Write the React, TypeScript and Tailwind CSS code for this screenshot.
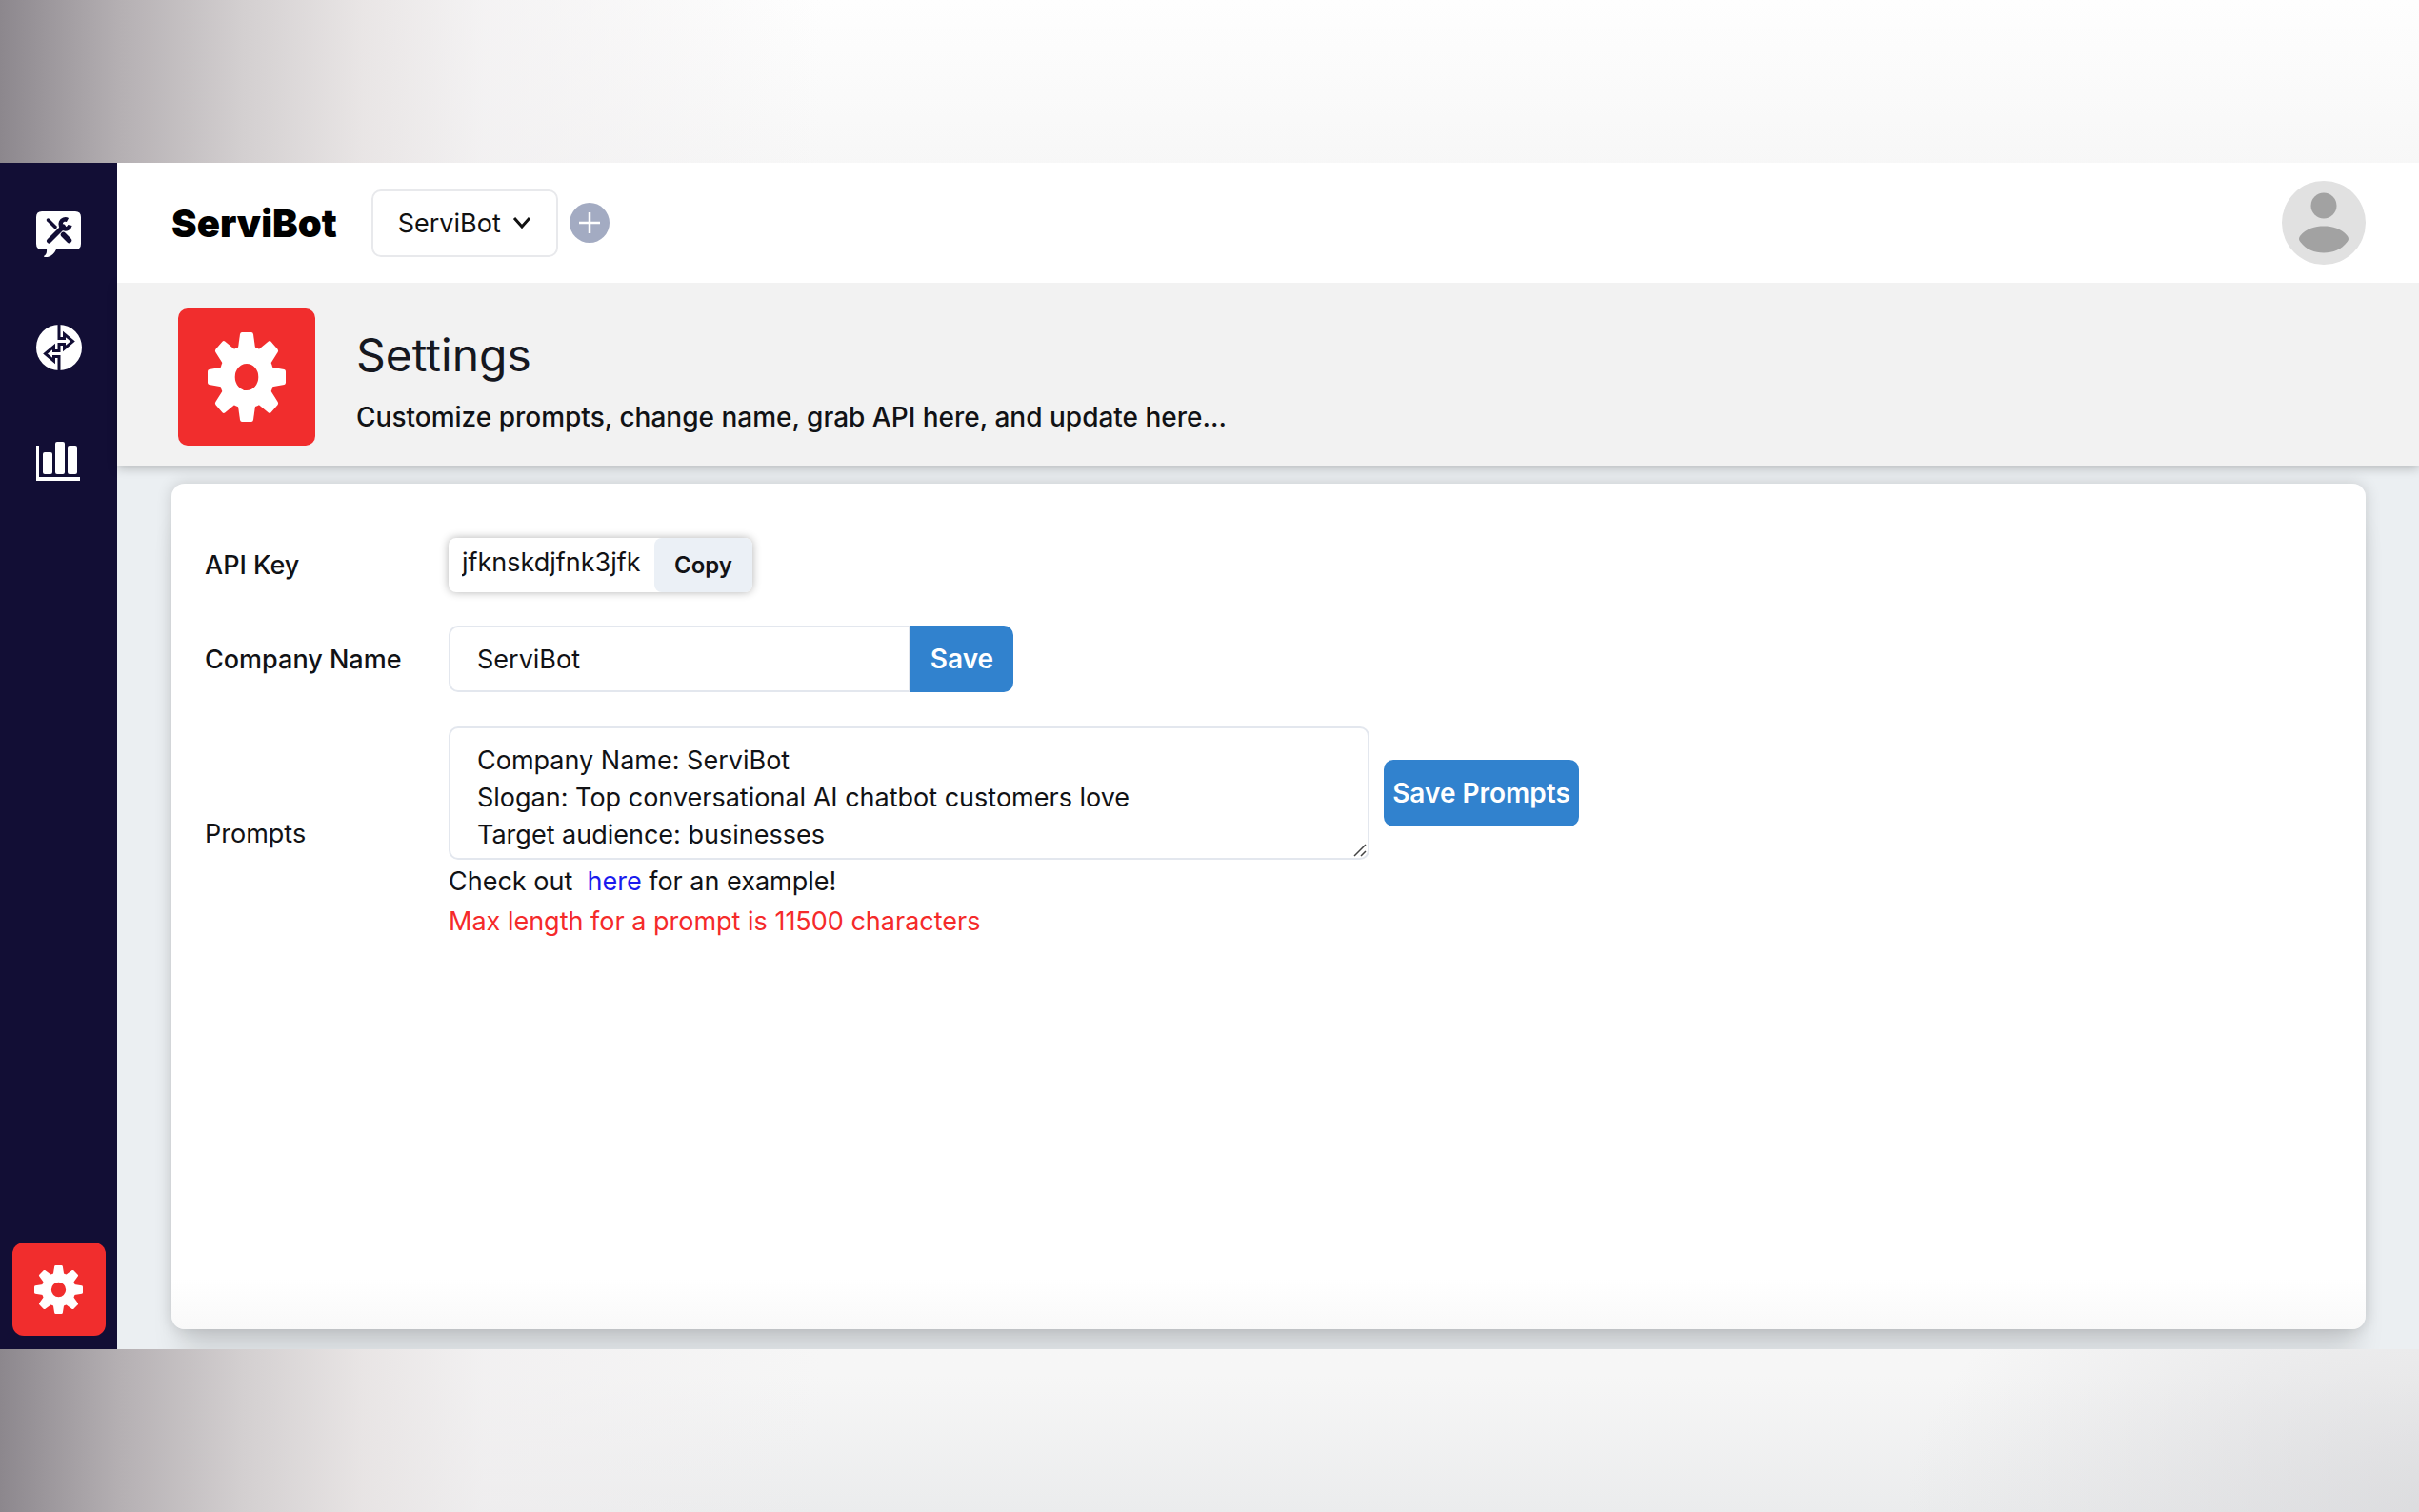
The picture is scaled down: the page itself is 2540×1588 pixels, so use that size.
import { useState } from 'react'

const PROMPTS = `Company Name: ServiBot
Slogan: Top conversational AI chatbot customers love
Target audience: businesses`

function ChatToolsIcon() {
    return (
        <svg viewBox="0 0 48 48" className="w-12 h-12">
            <path fill="#fff" d="M6 0h35q6 0 6 6v28q0 6-6 6H21q-3 6.500-9 8q-4 .5-4-1q3.500-2 3-7H6q-6 0-6-6V6q0-6 6-6z" />
            <g stroke="#120e35" strokeLinecap="round" fill="none">
                <path strokeWidth="3.500" d="M12.500 9l7.500 7.500" />
                <path strokeWidth="5.500" d="M28.500 24.500l6 6" />
                <path strokeWidth="5" d="M13.500 31L28.500 16" />
                <path strokeWidth="4.500" strokeLinecap="butt" d="M33 9a5 5 0 1 0 2.500 5.500" />
            </g>
        </svg>
    )
}

function ExchangeIcon() {
    return (
        <svg viewBox="0 0 48 48" className="w-12 h-12">
            <circle cx="24" cy="24" r="24" fill="#fff" />
            <path
                fill="none"
                stroke="#120e35"
                strokeWidth="3"
                d="M24 0v14.500h5.500V10l9 7.500l-9 7.500v-4.500H24v7h-5.500V23l-9 7.500l9 7.500v-4.500H24V48"
            />
        </svg>
    )
}

function ChartIcon() {
    return (
        <svg viewBox="0 0 48 48" className="w-12 h-12" fill="#fff">
            <path d="M0 8h3v33h43v4H0z" />
            <rect x="7" y="15" width="10" height="23" rx="2" />
            <rect x="20" y="4" width="10" height="34" rx="2" />
            <rect x="33" y="8" width="10" height="30" rx="2" />
        </svg>
    )
}

function GearIcon({ className }: { className: string }) {
    const teeth = [0, 45, 90, 135, 180, 225, 270, 315]
    return (
        <svg viewBox="0 0 100 100" preserveAspectRatio="none" className={className}>
            <g fill="#fff">
                {teeth.map((angle) => (
                    <path key={angle} transform={`rotate(${angle} 50 50)`} d="M38 24L41.500 2Q42 0 44 0h12Q58 0 58.500 2l3.500 22z" />
                ))}
            </g>
            <circle cx="50" cy="50" r="25" fill="none" stroke="#fff" strokeWidth="20" />
        </svg>
    )
}

function Sidebar() {
    return (
        <nav className="w-[123px] shrink-0 bg-[#120e35] flex flex-col items-center pt-[51px] pb-[14px]">
            <div className="flex flex-col items-center gap-[71px]">
                <a href="#chat" aria-label="Chat"><ChatToolsIcon /></a>
                <a href="#integrations" aria-label="Integrations"><ExchangeIcon /></a>
                <a href="#analytics" aria-label="Analytics"><ChartIcon /></a>
            </div>
            <a
                href="#settings"
                aria-label="Settings"
                className="mt-auto w-[98px] h-[98px] rounded-[12px] bg-[#f12d2d] flex items-center justify-center"
            >
                <GearIcon className="w-[51px] h-[51px]" />
            </a>
        </nav>
    )
}

function Header() {
    return (
        <header className="relative z-10 h-[126px] bg-white flex items-center pl-[57px] pr-14">
            <span className="text-[40px] font-black text-black">ServiBot</span>
            <button className="ml-9 h-[71px] px-[26px] rounded-[10px] border-2 border-[#e8e9ec] flex items-center gap-3 text-[#111]">
                ServiBot
                <svg viewBox="0 0 20 14" className="w-5 h-3.5" fill="none" stroke="currentColor" strokeWidth="3">
                    <path d="M2 2l8 9l8-9" />
                </svg>
            </button>
            <button aria-label="Add" className="ml-3 w-[42px] h-[42px] rounded-full bg-[#a3abc2] flex items-center justify-center">
                <svg viewBox="0 0 22 22" className="w-[22px] h-[22px]" stroke="#fff" strokeWidth="2.500">
                    <path d="M11 0v22M0 11h22" />
                </svg>
            </button>
            <button aria-label="Account" className="ml-auto">
                <svg viewBox="0 0 88 88" className="w-[88px] h-[88px]">
                    <circle cx="44" cy="44" r="44" fill="#e1e1e1" />
                    <circle cx="44" cy="26" r="13.500" fill="#a2a2a2" />
                    <path fill="#a2a2a2" d="M19 58C25 50 35 47.500 44 47.500S63 50 69 58q2 3 0 5.500C63 72 54 75.500 44 75.500S25 72 19 63.500q-2-2.500 0-5.500z" />
                </svg>
            </button>
        </header>
    )
}

export default function App() {
    const [company, setCompany] = useState('ServiBot')
    const [prompts, setPrompts] = useState(PROMPTS)

    return (
        <div
            className="min-h-screen flex flex-col py-[171px] text-[27px] leading-[39px] text-[#111215] font-['Inter',sans-serif]
                bg-[linear-gradient(to_right,#8c878d_0%,#b5b0b3_5%,#d3cfd0_10%,rgba(231,227,227,0.9)_15%,rgba(240,238,239,0.7)_20%,rgba(247,247,247,0)_34%),radial-gradient(ellipse_at_bottom_right,rgba(214,214,217,0.7),rgba(235,235,237,0)_15%),linear-gradient(to_bottom,#fefefe,#f7f7f7_11%,#f6f6f6_91%,#ebeced)]"
        >
            <div className="flex-1 flex overflow-hidden">
                <Sidebar />
                <main className="flex-1 flex flex-col bg-[#ebeff2]">
                    <Header />
                    <section className="relative h-48 bg-[#f2f2f2] flex items-center gap-[43px] pl-16 pt-[5px] shadow-[0_3px_10px_rgba(0,0,0,0.22)]">
                        <div className="w-36 h-36 rounded-[10px] bg-[#f12d2d] flex items-center justify-center">
                            <GearIcon className="w-[82px] h-[94px]" />
                        </div>
                        <div className="pt-2.5">
                            <h1 className="text-[48px] leading-[60px] text-[#16181f]">Settings</h1>
                            <p className="mt-4 text-[28px] font-medium">Customize prompts, change name, grab API here, and update here...</p>
                        </div>
                    </section>

                    <section
                        className="flex-1 mt-[19px] mb-[21px] ml-[57px] mr-14 px-[35px] pt-[57px] rounded-[14px]
                            bg-[linear-gradient(to_bottom,#ffffff_94%,#f9f9f9)] shadow-[0_0_16px_rgba(0,0,0,0.16),0_36px_30px_-10px_rgba(0,0,0,0.12)]"
                    >
                        <div className="flex items-center">
                            <label htmlFor="api-key" className="w-64 font-medium">API Key</label>
                            <div className="h-[57px] w-[319px] flex rounded-[8px] bg-white shadow-[0_0_10px_rgba(0,0,0,0.3)]">
                                <input
                                    id="api-key"
                                    readOnly
                                    value="jfknskdjfnk3jfk"
                                    className="flex-1 min-w-0 pl-3.5 pb-1.5 bg-transparent outline-none"
                                />
                                <button className="w-[103px] rounded-[8px] bg-[#ebf0f6] text-[24px] font-semibold">Copy</button>
                            </div>
                        </div>

                        <div className="mt-[35px] flex items-center">
                            <label htmlFor="company" className="w-64 font-medium">Company Name</label>
                            <input
                                id="company"
                                value={company}
                                onChange={(e) => setCompany(e.target.value)}
                                className="w-[485px] h-[70px] px-7 rounded-l-[10px] border-2 border-[#e3e7ee] outline-none"
                            />
                            <button className="w-[108px] h-[70px] rounded-r-[10px] bg-[#3182ce] text-white text-[28px] font-semibold">Save</button>
                        </div>

                        <div className="mt-9 flex items-center">
                            <label htmlFor="prompts" className="w-64">Prompts</label>
                            <div>
                                <div className="flex items-center gap-[15px]">
                                    <div className="relative">
                                        <textarea
                                            id="prompts"
                                            value={prompts}
                                            onChange={(e) => setPrompts(e.target.value)}
                                            className="block w-[967px] h-[140px] px-7 py-[14px] rounded-[10px] border-2 border-[#e3e7ee] outline-none overflow-hidden resize-none"
                                        />
                                        <svg viewBox="0 0 14 14" className="absolute right-[3px] bottom-[3px] w-3.5 h-3.5" stroke="#444" strokeWidth="1.500">
                                            <path d="M1 13L13 1M8 13l5-5" />
                                        </svg>
                                    </div>
                                    <button className="w-[205px] h-[70px] rounded-[10px] bg-[#3182ce] text-white text-[28px] font-semibold">Save Prompts</button>
                                </div>
                                <p className="mt-[3px] whitespace-pre">
                                    Check out{'  '}
                                    <a href="#example" className="text-[#1a1aee]">here</a> for an example!
                                </p>
                                <p className="mt-[3px] text-[#f52a2a]">Max length for a prompt is 11500 characters</p>
                            </div>
                        </div>
                    </section>
                </main>
            </div>
        </div>
    )
}
